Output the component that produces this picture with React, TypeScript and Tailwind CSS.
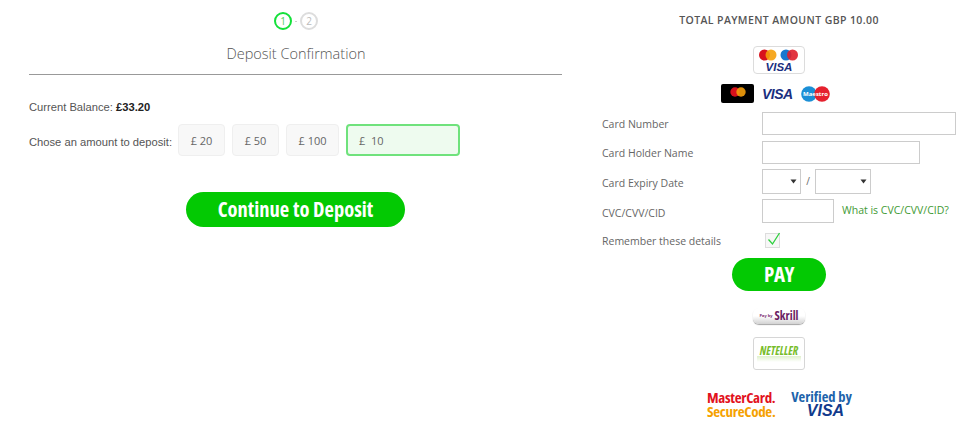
import React from 'react';

const amounts = [
  { label: '£ 20', width: 'w-[47px]' },
  { label: '£ 50', width: 'w-[47px]' },
  { label: '£ 100', width: 'w-[53px]' },
];

const CardsBadge = () => (
  <div className="w-[52px] h-[28px] border border-[#dcdcdc] rounded-[4px] bg-white">
    <svg width="50" height="26" viewBox="0 0 50 26">
      <circle cx="10.5" cy="8" r="5.5" fill="#d8111c" />
      <circle cx="17" cy="8" r="5.5" fill="#f59e0b" fillOpacity={0.9} />
      <circle cx="32" cy="8" r="5.5" fill="#1877cf" />
      <circle cx="38.5" cy="8" r="5.5" fill="#df1f2c" fillOpacity={0.9} />
      <text x="25" y="24" textAnchor="middle" fontFamily="'Liberation Sans', sans-serif" fontWeight="700" fontStyle="italic" fontSize="11.5" fill="#1a2f80">VISA</text>
    </svg>
  </div>
);

const CardsRow = () => (
  <div className="flex items-center justify-center h-[19px] pr-[7px]">
    <div className="w-[33px] h-[19px] rounded-[2px] bg-black flex justify-center pt-[3px]">
      <svg width="16" height="10" viewBox="0 0 16 10">
        <circle cx="5" cy="5" r="4.7" fill="#d8111c" />
        <circle cx="11" cy="5" r="4.7" fill="#f59e0b" fillOpacity={0.9} />
      </svg>
    </div>
    <span className="ml-[8px] w-[31px] font-['Liberation_Sans',sans-serif] font-bold italic text-[14px] tracking-[-0.5px] leading-none text-[#1a2f80]">VISA</span>
    <svg width="29" height="16" viewBox="0 0 29 16" className="ml-[8px]">
      <circle cx="8" cy="8" r="7.8" fill="#1b8fd6" />
      <circle cx="21" cy="8" r="7.8" fill="#e5212e" />
      <text x="14.5" y="10" textAnchor="middle" fontFamily="'Open Sans', sans-serif" fontWeight="700" fontSize="6" fill="#fff">Maestro</text>
    </svg>
  </div>
);

const SkrillBadge = () => (
  <div className="w-[52px] h-[16px] mt-[2px] rounded-[6px] bg-gradient-to-b from-white from-50% to-[#d2d2d2] shadow-[0_1px_1px_#a5a5a5] flex items-center justify-center gap-[2px]">
    <span className="font-bold text-[4px] leading-none text-[#7a2a70]">Pay by</span>
    <span className="font-bold text-[12px] leading-none [font-stretch:75%] text-[#6c1d63]">Skrill</span>
  </div>
);

const NetellerBadge = () => (
  <div className="w-[52px] h-[33px] border border-[#d6d6d6] rounded-[3px] bg-white flex flex-col items-center pt-[8px]">
    <span className="font-bold italic text-[11.5px] leading-[10px] [font-stretch:87.5%] text-[#77bd2a]">NETELLER</span>
    <div className="w-[44px] h-[6px] bg-gradient-to-b from-[#dff0cc] to-white" />
  </div>
);

const SecureLogos = () => (
  <div className="flex items-start justify-center gap-[14px] h-[30px] pl-[1px] [font-stretch:75%] font-bold">
    <div className="w-[70px] text-[15px] leading-[14px] tracking-[-0.3px] whitespace-nowrap">
      <div className="text-[#e2121d]">MasterCard.</div>
      <div className="text-[#f5a100]">SecureCode.</div>
    </div>
    <div className="w-[61px] text-center whitespace-nowrap">
      <div className="text-[14.5px] leading-[14px] text-[#1d63ab]">Verified by</div>
      <div className="font-['Liberation_Sans',sans-serif] italic text-[16px] leading-[13px] pl-[8px] text-[#123a8c]">VISA</div>
    </div>
  </div>
);

const Row: React.FC<{ label: string; className: string; labelPad?: string; children: React.ReactNode }> = ({ label, className, labelPad = 'pt-[3px]', children }) => (
  <div className={`flex items-center ${className}`}>
    <span className={`w-[172px] pl-[12px] shrink-0 text-[10.5px] text-[#666] ${labelPad}`}>{label}</span>
    {children}
  </div>
);

const Select: React.FC<{ className: string }> = ({ className }) => (
  <div className={`h-[25px] border border-[#ccc] flex items-center justify-end ${className}`}>
    <svg width="7" height="5" viewBox="0 0 7 5" className="mr-[3px]">
      <path d="M0.5 0.5h6L3.5 4.5z" fill="#333" />
    </svg>
  </div>
);

export default function App() {
  return (
    <div className="w-[979px] h-[430px] bg-white flex overflow-hidden font-['Open_Sans',sans-serif]">
      {/* Deposit form */}
      <section className="w-[533px] ml-[29px] shrink-0">
        <div className="flex items-center justify-center gap-[3px] pt-[12px] pl-[1px]">
          <div className="w-[18px] h-[18px] rounded-full border-2 border-[#14e03a] flex items-center justify-center text-[10px] leading-none text-[#4ccf5c]">1</div>
          <div className="w-[2px] h-[1px] bg-[#ccc]" />
          <div className="w-[18px] h-[18px] rounded-full border-2 border-[#ddd] flex items-center justify-center text-[10px] leading-none text-[#bbb]">2</div>
        </div>
        <h1 className="mt-[14px] h-[20px] text-center text-[14.5px] leading-[20px] font-light text-[#555] pl-[1px]">Deposit Confirmation</h1>
        <div className="mt-[10px] h-px bg-[#999]" />
        <p className="mt-[25px] h-[14px] font-['Liberation_Sans',sans-serif] text-[11.2px] leading-[14px] text-[#555]">
          Current Balance: <b className="text-[#222]">£33.20</b>
        </p>
        <div className="mt-[10px] flex items-center">
          <span className="w-[149px] shrink-0 pt-[5px] font-['Liberation_Sans',sans-serif] text-[11.2px] text-[#555]">Chose an amount to deposit:</span>
          <div className="flex gap-[7px]">
            {amounts.map((a) => (
              <div key={a.label} className={`h-[32px] pt-[2px] border border-[#efefef] rounded-[4px] bg-[#f8f8f8] flex items-center justify-center text-[11px] text-[#666] ${a.width}`}>{a.label}</div>
            ))}
          </div>
          <div className="ml-[7px] w-[114px] h-[32px] pl-[11px] pt-[2px] border-2 border-[#6fe27c] rounded-[4px] bg-[#eefbef] flex items-center text-[11px] whitespace-pre text-[#666]">£  10</div>
        </div>
        <div className="mt-[36px] flex justify-center">
          <button className="w-[219px] h-[35px] rounded-full bg-[#03c903] text-white text-[20.5px] font-bold leading-none [font-stretch:75%]">Continue to Deposit</button>
        </div>
      </section>

      {/* Card payment */}
      <section className="w-[378px] ml-[28px] shrink-0">
        <h2 className="pt-[13px] h-[46px] text-center text-[10.5px] leading-[14px] font-semibold text-[#555] tracking-[0.4px]">TOTAL PAYMENT AMOUNT GBP 10.00</h2>
        <div className="flex justify-center"><CardsBadge /></div>
        <div className="mt-[10px]"><CardsRow /></div>

        <Row label="Card Number" className="mt-[9px]">
          <div className="w-[194px] h-[23px] border border-[#ccc]" />
        </Row>
        <Row label="Card Holder Name" className="mt-[6px]">
          <div className="w-[158px] h-[23px] border border-[#ccc]" />
        </Row>
        <Row label="Card Expiry Date" className="mt-[5px]" labelPad="pt-[5px]">
          <Select className="w-[39px]" />
          <span className="w-[14px] text-center text-[10px] text-[#666]">/</span>
          <Select className="w-[56px]" />
        </Row>
        <Row label="CVC/CVV/CID" className="mt-[5px]" labelPad="pt-[6px]">
          <div className="w-[72px] h-[24px] border border-[#ccc]" />
          <a className="ml-[8px] text-[10.5px] whitespace-nowrap text-[#3f9a34]">What is CVC/CVV/CID?</a>
        </Row>
        <Row label="Remember these details" className="mt-[8px]">
          <div className="ml-[3px] w-[15px] h-[15px] border border-[#ddd] bg-[#f7f7f7] relative">
            <svg width="16" height="16" viewBox="0 0 16 16" className="absolute -top-[3px] left-0">
              <path d="M2.5 8.5 L6.5 13 L13.5 2" fill="none" stroke="#2fd03f" strokeWidth="1.3" />
            </svg>
          </div>
        </Row>

        <div className="mt-[8px] flex justify-center">
          <button className="w-[94px] h-[33px] rounded-full bg-[#03c903] text-white text-[21px] font-bold tracking-[-0.5px] leading-none [font-stretch:75%]">PAY</button>
        </div>
        <div className="mt-[15px] flex justify-center"><SkrillBadge /></div>
        <div className="mt-[13px] flex justify-center"><NetellerBadge /></div>
        <div className="mt-[20px]"><SecureLogos /></div>
      </section>
    </div>
  );
}
